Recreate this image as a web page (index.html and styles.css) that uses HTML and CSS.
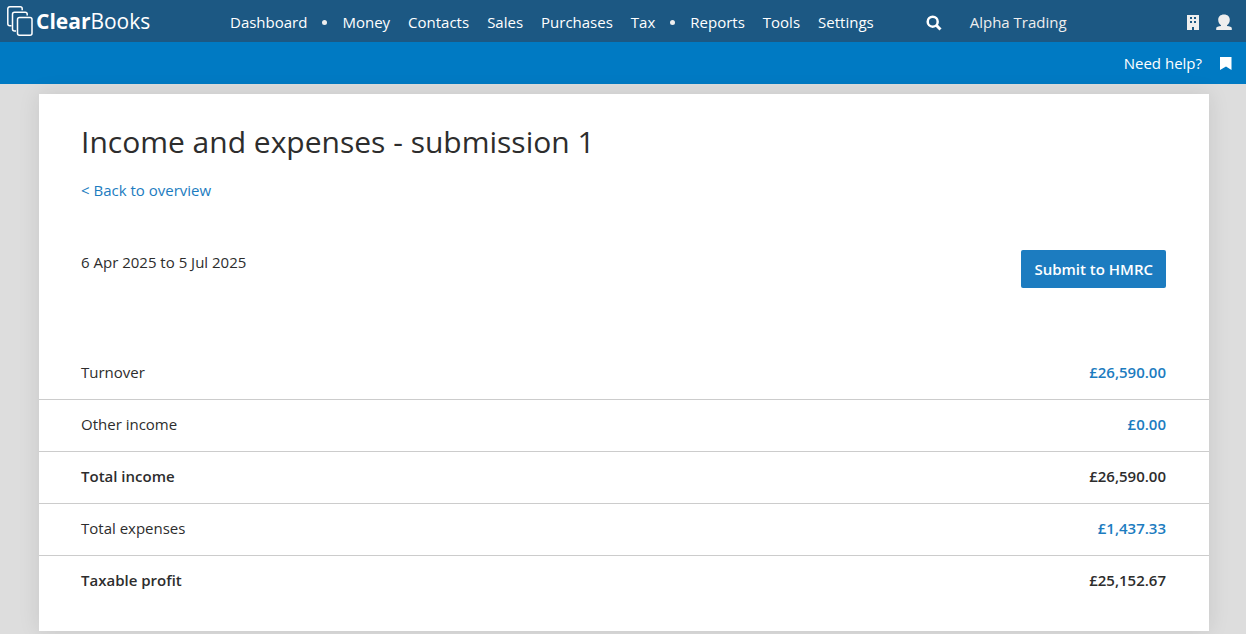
FILE: index.html
```html
<!DOCTYPE html>
<html lang="en">
<head>
  <meta charset="UTF-8">
  <meta name="viewport" content="width=device-width, initial-scale=1.0">
  <title>Income and expenses - ClearBooks</title>
  <link rel="stylesheet" href="styles.css">
</head>
<body>
  <header class="topbar">
    <a class="logo" href="#">
      <svg width="27" height="31" viewBox="0 0 27 31" fill="none" stroke="#fff" stroke-width="1.5">
        <path d="M4.5 19.8H2.8a2 2 0 0 1-2-2V2.8a2 2 0 0 1 2-2h10.4a2 2 0 0 1 2 2v1.4"/>
        <path d="M9 25H7.500a2 2 0 0 1-2-2V8.200a2 2 0 0 1 2-2h10.700a2 2 0 0 1 2 2V9.500"/>
        <rect x="10.500" y="11.500" width="14.500" height="17.800" rx="2"/>
      </svg>
      <span class="logo-text"><b>Clear</b>Books</span>
    </a>

    <nav class="main-nav">
      <a href="#">Dashboard</a>
      <span class="dot"></span>
      <a href="#">Money</a>
      <a href="#">Contacts</a>
      <a href="#">Sales</a>
      <a href="#">Purchases</a>
      <a href="#">Tax</a>
      <span class="dot"></span>
      <a href="#">Reports</a>
      <a href="#">Tools</a>
      <a href="#">Settings</a>
    </nav>

    <button class="icon-btn search" aria-label="Search">
      <svg width="16" height="16" viewBox="0 0 16 16" fill="none" stroke="#fff" stroke-width="2.5">
        <circle cx="6.700" cy="6.700" r="5"/>
        <path d="M10.300 10.300l4.200 4.200" stroke-width="3"/>
      </svg>
    </button>
    <a class="company" href="#">Alpha Trading</a>

    <div class="account">
      <button class="icon-btn" aria-label="Organisation">
        <svg width="12" height="16" viewBox="0 0 12 16">
          <path fill="#eee" fill-rule="evenodd" d="M0 1h12v15H7v-3H5v3H0zM3 3v2h2V3zM7 3v2h2V3zM3 7v2h2V7zM7 7v2h2V7z"/>
        </svg>
      </button>
      <button class="icon-btn" aria-label="Profile">
        <svg width="16" height="16" viewBox="0 0 16 16" fill="#eee">
          <path d="M8 .5c3.600 0 5.800 2.200 5.800 5.300 0 2.500-1.100 4.400-2.800 5.500v.8c2.600.4 4.800.9 4.800 2.200V16H.2v-1.700c0-1.300 2.200-1.800 4.800-2.200v-.8C3.300 10.200 2.200 8.300 2.200 5.800 2.200 2.700 4.400.5 8 .5z"/>
        </svg>
      </button>
    </div>
  </header>

  <div class="subbar">
    <a href="#">Need help?</a>
    <button class="icon-btn" aria-label="Bookmark">
      <svg width="12" height="14" viewBox="0 0 12 14" fill="#fff">
        <path d="M0 1h11.500v13L6 10.500 0 14z"/>
      </svg>
    </button>
  </div>

  <main class="card">
    <h1>Income and expenses - submission 1</h1>
    <a class="back" href="#">&lt; Back to overview</a>

    <div class="period">
      <p>6 Apr 2025 to 5 Jul 2025</p>
      <button class="btn">Submit to HMRC</button>
    </div>

    <table class="summary">
      <tr>
        <th scope="row">Turnover</th>
        <td><a href="#">£26,590.00</a></td>
      </tr>
      <tr>
        <th scope="row">Other income</th>
        <td><a href="#">£0.00</a></td>
      </tr>
      <tr class="total">
        <th scope="row">Total income</th>
        <td>£26,590.00</td>
      </tr>
      <tr>
        <th scope="row">Total expenses</th>
        <td><a href="#">£1,437.33</a></td>
      </tr>
      <tr class="total">
        <th scope="row">Taxable profit</th>
        <td>£25,152.67</td>
      </tr>
    </table>
  </main>
</body>
</html>
```
FILE: styles.css
```css
* {
  box-sizing: border-box;
  margin: 0;
  padding: 0;
}

body {
  background: #ddd;
  font-family: 'Open Sans', 'Noto Sans', sans-serif;
  font-size: 15px;
  line-height: 20px;
  color: #2d2d2d;
}

a {
  color: #1c7cc0;
  text-decoration: none;
}

svg {
  display: block;
}

.topbar {
  display: flex;
  align-items: center;
  height: 42px;
  padding: 0 14px 0 7px;
  background: #1c5883;
  white-space: nowrap;
}

.topbar a {
  color: #fff;
}

.logo {
  display: flex;
  align-items: center;
  gap: 2px;
  width: 223px;
}

.logo-text {
  font-size: 21px;
}

.main-nav {
  display: flex;
  align-items: center;
  gap: 18px;
  padding-top: 2px;
}

.dot {
  width: 5px;
  height: 5px;
  margin: 0 -3px;
  border-radius: 50%;
  background: #eee;
}

.icon-btn {
  border: none;
  background: none;
  cursor: pointer;
}

.search {
  margin: 4px 28px 0 52px;
}

.topbar .company {
  padding-top: 2px;
  color: #eee;
}

.account {
  display: flex;
  gap: 17px;
  margin-left: auto;
  padding-top: 2px;
}

.subbar {
  display: flex;
  justify-content: flex-end;
  align-items: center;
  gap: 18px;
  height: 42px;
  padding: 0 14px;
  background: #007ac3;
}

.subbar a {
  color: #fff;
}

.card {
  margin: 10px 37px 3px 39px;
  padding: 28px 0 24px;
  background: #fff;
  box-shadow: 0 0 20px rgba(0, 0, 0, 0.1);
}

h1 {
  padding: 0 43px 0 42px;
  font-size: 30px;
  font-weight: 400;
  line-height: 40px;
}

.back {
  display: block;
  margin-top: 18px;
  padding: 0 43px 0 42px;
}

.period {
  display: flex;
  justify-content: space-between;
  align-items: flex-start;
  margin: 50px 0 60px;
  padding: 0 43px 0 42px;
}

.period p {
  padding-top: 2px;
}

.btn {
  height: 38px;
  padding: 0 13px;
  border: none;
  border-radius: 2px;
  background: #1c7cc0;
  color: #fff;
  font: inherit;
  font-weight: 600;
  cursor: pointer;
}

.summary {
  width: 100%;
  border-collapse: separate;
  border-spacing: 0;
}

.summary th,
.summary td {
  padding: 14px 43px 17px 42px;
  border-bottom: 1px solid #ccc;
}

.summary th {
  font-weight: 400;
  text-align: left;
}

.summary td {
  font-weight: 600;
  text-align: right;
}

.summary .total th {
  font-weight: 600;
}

.summary tr:last-child th,
.summary tr:last-child td {
  border-bottom: none;
}
```
